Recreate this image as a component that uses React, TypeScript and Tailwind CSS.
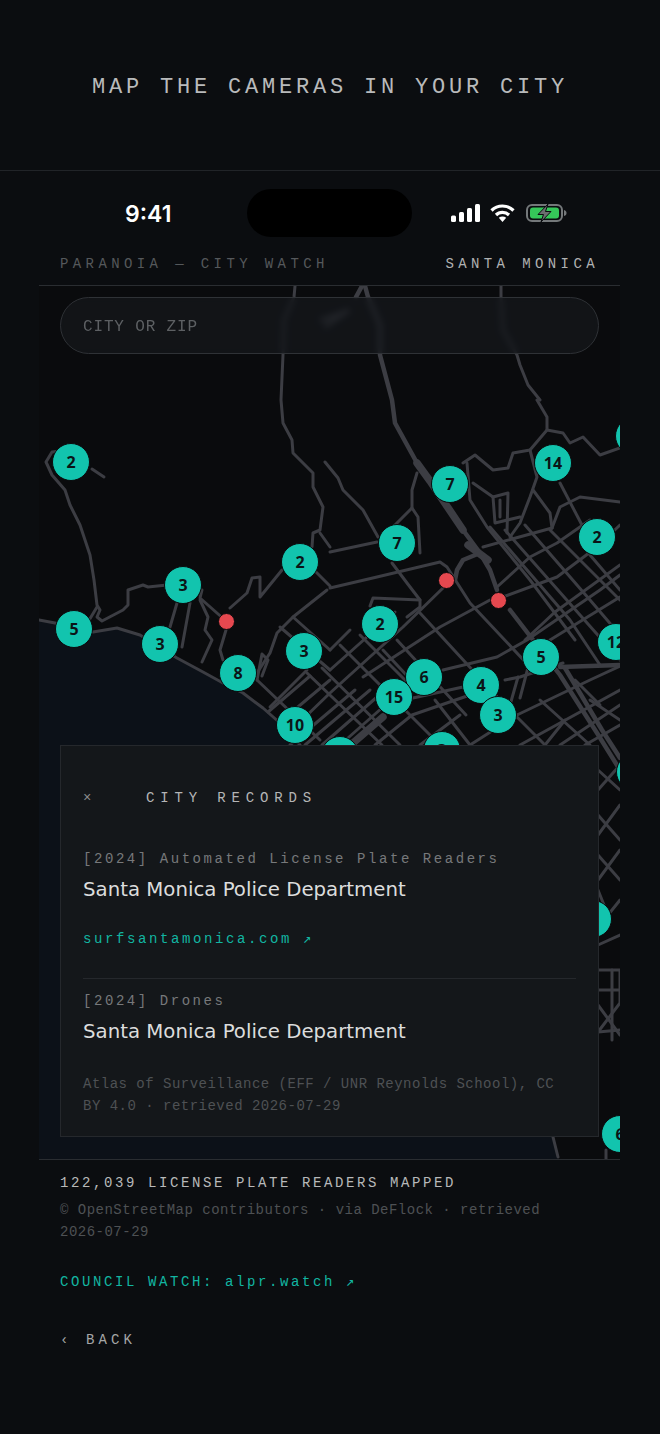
import React from 'react';

const MONO = "font-['Liberation_Mono',monospace]";

// road polylines in page coordinates (map svg viewBox starts at 39,286)
const minorRoads: string[] = [
  // west hills and coast
  '104,477 92,469',
  '60,451 52,452 46,462 52,475 65,490 70,505 80,525 84,537 90,555 94,580 97,605 100,610 97,617 102,621 123,610 128,605 128,590 143,585 148,587 167,585',
  '97,607 88,622',
  '39,620 55,623 73,629',
  '93,632 117,628 140,635 177,658 203,672 223,683 243,693 263,708 280,723 300,745',
  '177,603 170,627',
  '190,603 182,647',
  '200,600 208,617 205,630 212,640 202,662',
  '202,590 200,598 226,621',
  '226,630 220,650 223,660',
  '230,608 247,593 252,578 260,577 260,597 282,570',
  '295,286 294,297 284,320 283,355 281,400 283,423 292,440 293,453 313,473 313,487 323,507 320,530 313,533 312,547',
  '320,533 330,547',
  '317,560 314,570 330,586',
  '325,462 338,478 343,490 363,510 378,537',
  '330,552 377,542',
  // arterials west of the freeway
  '330,588 377,577 440,562 447,567 470,603 530,667',
  '327,590 293,617 277,633 270,653 257,673',
  '307,670 270,707',
  '280,627 330,670',
  '293,617 330,650',
  '257,680 262,654 268,660 262,676',
  '417,473 412,490 412,508 393,527',
  '412,508 418,517 420,553',
  '392,563 407,583 420,600 420,607 407,617',
  '370,606 373,598 420,600',
  '443,588 403,627 330,693 300,722',
  // grid, north-east / south-west
  '330,650 350,630',
  '330,670 395,612',
  '290,745 355,690',
  '305,745 370,690',
  '322,745 385,690',
  '340,745 400,692',
  '268,712 310,676',
  '280,722 330,680',
  '363,677 440,627 490,600',
  '375,745 412,715 470,695',
  '420,745 460,715',
  // grid, north-west / south-east
  '307,673 382,745',
  '257,680 320,740',
  '322,668 400,745',
  '340,645 440,745',
  '360,635 420,695',
  '383,650 425,695',
  '420,613 500,700 545,745',
  '397,640 466,715',
  '435,700 470,745',
  // east of the freeway
  '443,670 497,657 527,640 600,590 620,575',
  '413,698 463,687',
  '505,680 520,677 563,663',
  '518,677 510,705',
  '530,660 520,698',
  '517,715 590,680 620,666',
  '470,745 517,715',
  '520,745 620,690',
  '560,745 620,705',
  '585,745 620,725',
  '540,700 590,745',
  '537,400 547,417 547,430 530,450 513,453 508,468 493,470 475,455 463,463',
  '540,400 528,385 520,365 517,355 503,330 501,297 501,286',
  '547,430 563,433 570,443 583,437 600,455 620,448',
  '530,450 537,477 530,497 520,523 510,537',
  '533,490 550,513 552,528',
  '560,483 583,527',
  '552,528 560,507 580,497 620,502',
  '467,463 470,500 487,527 530,580 575,640',
  '473,483 493,497 508,493 507,533',
  '493,497 495,523 520,517',
  '500,500 500,517',
  '483,547 552,528',
  '497,587 530,557 557,543 590,520',
  '503,597 557,577 597,547 620,525',
  '490,527 570,620 600,665',
  '505,530 580,615 620,660',
  '525,525 590,600 620,635',
  '550,530 620,600',
  '590,555 620,590',
  '525,640 555,612',
  '550,640 620,597',
  '555,612 620,565',
  '590,700 620,720',
  '575,680 600,705',
  '545,745 565,720',
  // strip right of the panel
  '598,770 620,790',
  '598,790 620,765',
  '598,815 620,840',
  '598,835 620,805',
  '598,855 620,880',
  '598,880 620,850',
  '598,890 608,915 620,900',
  '598,945 620,935',
  '598,970 620,970 620,1003 598,1032',
  '598,990 620,990',
  '598,1005 620,1035',
  '598,1032 620,1030',
  '612,970 612,1040',
  '550,1125 558,1157',
  '606,1150 606,1159',
];

const majorRoads: string[] = [
  '362,286 356,297',
  '365,286 368,297 380,325',
  '380,325 380,355 392,400 395,423 417,463',
  '463,530 480,553 490,570 497,590',
  '510,610 560,675 597,733 620,770',
  '565,668 602,730 620,758',
  '480,553 463,560 457,570 455,580',
  '560,667 620,665',
  '322,320 348,311 326,326',
];

const thickRoads: string[] = [
  '417,463 430,481 463,530',
  '468,545 488,560',
  '353,743 383,717',
];

type Pin = { x: number; y: number; n: string };

const clusters: Pin[] = [
  { x: 71, y: 462, n: '2' },
  { x: 183, y: 585, n: '3' },
  { x: 74, y: 629, n: '5' },
  { x: 160, y: 644, n: '3' },
  { x: 238, y: 673, n: '8' },
  { x: 304, y: 651, n: '3' },
  { x: 300, y: 562, n: '2' },
  { x: 397, y: 543, n: '7' },
  { x: 450, y: 484, n: '7' },
  { x: 553, y: 463, n: '14' },
  { x: 597, y: 537, n: '2' },
  { x: 380, y: 624, n: '2' },
  { x: 424, y: 677, n: '6' },
  { x: 394, y: 697, n: '15' },
  { x: 481, y: 685, n: '4' },
  { x: 498, y: 715, n: '3' },
  { x: 541, y: 657, n: '5' },
  { x: 295, y: 725, n: '10' },
  { x: 616, y: 642, n: '12' },
  { x: 634, y: 436, n: '3' },
  { x: 340, y: 755, n: '9' },
  { x: 442, y: 750, n: '3' },
  { x: 593, y: 919, n: '4' },
  { x: 635, y: 772, n: '2' },
  { x: 620, y: 1134, n: '6' },
];

const alerts = [
  { x: 226, y: 621 },
  { x: 446, y: 580 },
  { x: 498, y: 600 },
];

function StatusIcons() {
  return (
    <div className="flex items-center">
      <svg width="29" height="18" viewBox="0 0 29 18" fill="white">
        <rect x="0" y="11.500" width="5" height="6.500" rx="1.500" />
        <rect x="8" y="8" width="5" height="10" rx="1.500" />
        <rect x="16" y="4" width="5" height="14" rx="1.500" />
        <rect x="24" y="0" width="5" height="18" rx="1.500" />
      </svg>
      <svg width="25" height="18" viewBox="0 0 25 18" fill="none" stroke="white" strokeWidth="3.200" className="ml-[10px]">
        <path d="M1.500 6.500C7.500 0.500 17.500 0.500 23.500 6.500" />
        <path d="M6 11C9.500 7.500 15.500 7.500 19 11" />
        <path d="M12.500 18L8.800 13.800C11 12 14 12 16.200 13.800Z" fill="white" stroke="none" />
      </svg>
      <svg width="41" height="18" viewBox="0 0 41 18" className="ml-[11px]">
        <rect x="1" y="1" width="35" height="16" rx="5" fill="none" stroke="#74787a" strokeWidth="2" />
        <rect x="4" y="3.500" width="29" height="11" rx="3" fill="#35c759" />
        <path d="M38 6V12C39.800 11.500 40.500 10.500 40.500 9C40.500 7.500 39.800 6.500 38 6Z" fill="#74787a" />
        <path d="M22 0L12 10.500H17.500L15 18L25 7.500H19.500Z" fill="#6a6f6e" stroke="#0b0d10" strokeWidth="1" />
      </svg>
    </div>
  );
}

function RoadMap() {
  return (
    <svg className="absolute inset-0 h-full w-full" viewBox="39 286 581 873" fill="none" strokeLinecap="round" strokeLinejoin="round">
      {/* water below the coast line */}
      <path
        d="M39 620L55 623L73 629L93 632L117 628L140 635L177 658L203 672L223 683L243 693L263 708L280 723L300 745L550 1125L558 1159L39 1159Z"
        fill="#0c1118"
        stroke="none"
      />
      {thickRoads.map((pts, i) => (
        <polyline key={`t-${i}`} points={pts} stroke="#3c3d43" strokeWidth="7.500" />
      ))}
      {majorRoads.map((pts, i) => (
        <polyline key={`j-${i}`} points={pts} stroke="#3c3d43" strokeWidth="4.500" />
      ))}
      {minorRoads.map((pts, i) => (
        <polyline key={`m-${i}`} points={pts} stroke="#3c3d43" strokeWidth="3" />
      ))}
    </svg>
  );
}

function MapPanel() {
  return (
    <div className="relative h-[873px] w-full overflow-hidden bg-[#0a0b0d]">
      <RoadMap />
      {clusters.map((c) => (
        <div
          key={`${c.x}-${c.y}`}
          className="absolute flex h-[38px] w-[38px] items-center justify-center rounded-full border border-[#0a0b0d] bg-[#12c4ae] font-['Open_Sans',sans-serif] text-[16px] font-bold text-[#0b1517]"
          style={{ left: c.x - 39 - 19, top: c.y - 286 - 19 }}
        >
          {c.n}
        </div>
      ))}
      {alerts.map((a) => (
        <div
          key={a.x}
          className="absolute h-[17px] w-[17px] rounded-full border border-[#0a0b0d] bg-[#e5484f]"
          style={{ left: a.x - 39 - 8.5, top: a.y - 286 - 8.5 }}
        />
      ))}

      {/* search field */}
      <div className={`absolute left-[21px] right-[21px] top-[11px] flex h-[57px] items-center rounded-full border border-[#2f3236] bg-[#16181c]/70 px-[22px] pt-[3px] text-[16px] tracking-[0.85px] text-[#5d6063] backdrop-blur-[3px] ${MONO}`}>
        CITY OR ZIP
      </div>

      {/* records sheet */}
      <div className={`absolute left-[21px] right-[21px] top-[459px] h-[392px] border border-[#25282c] bg-[#14171a] px-[22px] ${MONO}`}>
        <div className="flex items-center pt-[43px] leading-[18px]">
          <span className="w-[63px] text-[14px] text-[#8a8c8e]">×</span>
          <span className="text-[14px] tracking-[5.85px] text-[#b4b5b6]">CITY RECORDS</span>
        </div>
        <div className="mt-[43px] text-[14px] leading-[18px] tracking-[2.56px] text-[#77797b]">[2024] Automated License Plate Readers</div>
        <div className="mt-[9px] font-['DejaVu_Sans',sans-serif] text-[19.75px] leading-[26px] text-[#dcdddd]">Santa Monica Police Department</div>
        <div className="mt-[27px] text-[14px] leading-[18px] tracking-[2.6px] text-[#12b5a1]">surfsantamonica.com ↗</div>
        <div className="mt-[30px] border-t border-[#25282c] pt-[13px] text-[14px] leading-[18px] tracking-[2.56px] text-[#77797b]">[2024] Drones</div>
        <div className="mt-[9px] font-['DejaVu_Sans',sans-serif] text-[19.75px] leading-[26px] text-[#dcdddd]">Santa Monica Police Department</div>
        <div className="mt-[28px] text-[14px] leading-[22px] tracking-[0.49px] text-[#4e5154]">
          Atlas of Surveillance (EFF / UNR Reynolds School), CC<br />BY 4.0 · retrieved 2026-07-29
        </div>
      </div>
    </div>
  );
}

export default function App() {
  return (
    <div className={`h-[1434px] w-[660px] overflow-hidden bg-[#0b0d10] ${MONO}`}>
      <header className="flex h-[171px] items-center justify-center border-b border-[#212428] pt-[5px]">
        <h1 className="text-[22px] font-normal tracking-[3.8px] text-[#b9babb]">MAP THE CAMERAS IN YOUR CITY</h1>
      </header>

      <main className="mx-[39px] w-[581px]">
        {/* status bar */}
        <div className="flex h-[66px] items-start pt-[18px]">
          <div className="w-[208px] pl-[86px] pt-[13px]">
            <span className="block font-['Inter',sans-serif] text-[23px] font-semibold leading-[24px] text-white">9:41</span>
          </div>
          <div className="h-[48px] w-[165px] rounded-[24px] bg-black" />
          <div className="pl-[39px] pt-[15px]"><StatusIcons /></div>
        </div>

        {/* city bar */}
        <div className="flex h-[49px] items-center justify-between border-b border-[#2a2d31] px-[21px] pt-[6px] text-[14px] tracking-[4.4px]">
          <span className="text-[#55585b]">PARANOIA — CITY WATCH</span>
          <span className="text-[#b0b1b2]">SANTA MONICA</span>
        </div>

        <MapPanel />
        <div className="h-px bg-[#2a2d31]" />

        <footer className="px-[21px] pt-[14px]">
          <div className="text-[14px] leading-[18px] tracking-[2.6px] text-[#b8b9ba]">122,039 LICENSE PLATE READERS MAPPED</div>
          <div className="mt-[7px] text-[14px] leading-[22px] tracking-[0.49px] text-[#4e5154]">
            © OpenStreetMap contributors · via DeFlock · retrieved<br />2026-07-29
          </div>
          <div className="mt-[30px] text-[14px] leading-[18px] tracking-[2.6px] text-[#12b5a1]">COUNCIL WATCH: alpr.watch ↗</div>
          <div className="mt-[40px] flex text-[14px] leading-[18px] text-[#a5a6a7]">
            <span className="w-[26px]">‹</span>
            <span className="tracking-[4.1px]">BACK</span>
          </div>
        </footer>
      </main>
    </div>
  );
}
